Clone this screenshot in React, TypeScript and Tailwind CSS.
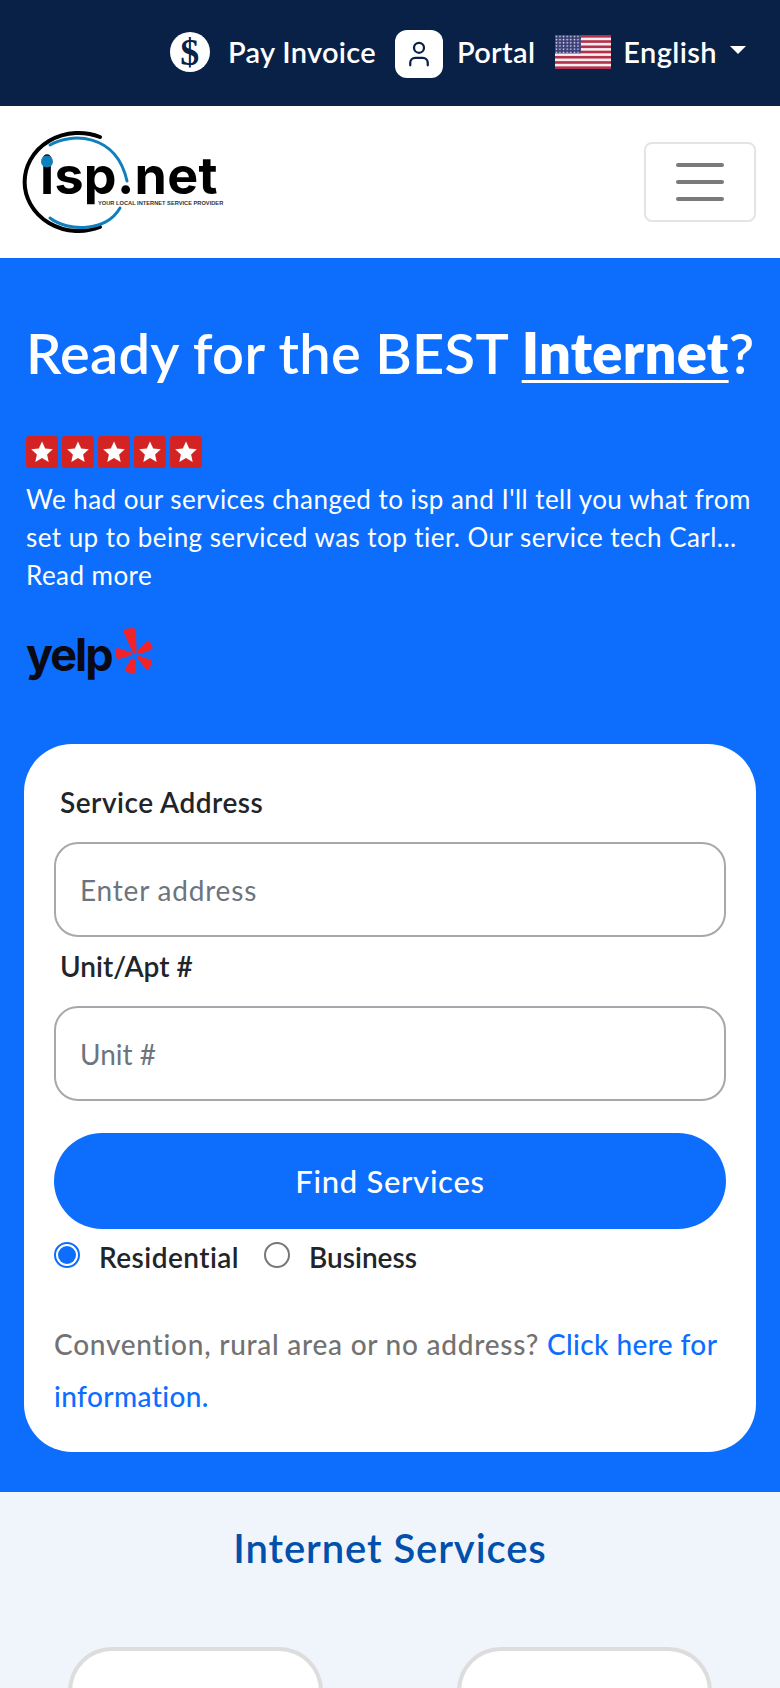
import { User } from "lucide-react";

const FONT = "font-['Lato','Noto_Sans',sans-serif]";

function Flag() {
  const stripes = [0, 1, 2, 3, 4, 5, 6];
  return (
    <svg width="56" height="34" viewBox="0 0 56 34" className="shrink-0">
      <defs>
        <pattern id="stars" width="3.6" height="3.2" patternUnits="userSpaceOnUse">
          <circle cx="1.4" cy="1.4" r="0.8" fill="#e8e8f0" />
        </pattern>
      </defs>
      <rect width="56" height="34" fill="#f4eef0" />
      {stripes.map((i) => (
        <rect key={i} y={i * 5.23} width="56" height="2.62" fill="#b5314a" />
      ))}
      <rect width="26" height="18.3" fill="#3c3f78" />
      <rect width="26" height="18.3" fill="url(#stars)" />
    </svg>
  );
}

function Logo() {
  return (
    <div className="relative h-[101px] w-[200px] shrink-0">
      <span className="absolute left-[16px] top-[9px] font-['Inter',sans-serif] text-[52px] font-bold leading-[70px] tracking-[0.3px] text-black">
        isp.net
      </span>
      <svg width="112" height="101" viewBox="0 0 112 101" className="absolute left-0 top-0 overflow-visible" fill="none">
        <path d="M76 5 A 54 49 0 1 0 76 95" stroke="#000" strokeWidth="4" strokeLinecap="round" />
        <path d="M26 13 C 46 1 92 0 103 49" stroke="#0f7fbd" strokeWidth="3" strokeLinecap="round" />
        <path d="M26 86 C 44 100 82 100 96 76" stroke="#0f7fbd" strokeWidth="3" strokeLinecap="round" />
        <circle cx="23" cy="29.5" r="6" fill="#0f7fbd" />
      </svg>
      <span className="absolute left-[74px] top-[67px] whitespace-nowrap font-['Liberation_Sans',sans-serif] text-[5.7px] font-bold leading-[8px] text-[#333]">
        YOUR LOCAL INTERNET SERVICE PROVIDER
      </span>
    </div>
  );
}

function Star() {
  return (
    <span className="flex h-8 w-8 items-center justify-center rounded-[3px] bg-[#d32323]">
      <svg width="24" height="24" viewBox="0 0 24 24" fill="#fff">
        <path d="M12 1.5l3.2 7 7.6.8-5.7 5.1 1.6 7.500L12 18.100l-6.700 3.800 1.600-7.500L1.200 9.300l7.600-.8z" />
      </svg>
    </span>
  );
}

function Yelp() {
  return (
    <div className="flex items-end">
      <span className="font-['Inter',sans-serif] text-[45px] font-bold leading-[44px] tracking-[-2px] text-[#0a0a14]">yelp</span>
      <svg width="38" height="47" viewBox="0 0 38 47" fill="#f0222a" className="mb-[2px] ml-[4px]">
        <path d="M8 5 Q6 2 9 1 L16 0 Q20 0 20 3 L20.500 24 Q20 28 17 25Z" />
        <path d="M2 20 L14 24 Q18 26 15 27.500 L3 31 Q0 31 0 28 L0 22 Q0 20 2 20Z" />
        <path d="M22 22 L31 13 Q33 12 34 14 L36.500 19 Q37 21 35 22 L24 26 Q20 26 22 22Z" />
        <path d="M24 28 L35 32 Q37 33 36 35 L33 41 Q32 43 30 41 L22 31 Q21 27 24 28Z" />
        <path d="M18 31 Q20 31 20 34 L19 44 Q19 46 17 46 L11 44 Q8 43 9 41 L15 31 Q17 30 18 31Z" />
      </svg>
    </div>
  );
}

export default function App() {
  return (
    <div className={`${FONT} min-h-[1688px] w-[780px] overflow-hidden bg-[#f0f5fc]`}>
      <div className="flex h-[106px] items-center justify-end bg-[#0a2147] pb-[2px] pr-[34px] text-[29px] font-semibold tracking-[0.3px] text-white">
        <span className="flex h-10 w-10 items-center justify-center rounded-full bg-white font-['Liberation_Serif',serif] text-[38px] font-bold text-[#0a2147]">
          $
        </span>
        <span className="ml-[18px]">Pay Invoice</span>
        <span className="ml-[19px] mt-[4px] flex h-12 w-12 items-center justify-center rounded-xl bg-white">
          <User size={30} strokeWidth={1.8} className="text-[#0a2147]" />
        </span>
        <span className="ml-[14px]">Portal</span>
        <span className="ml-[20px]">
          <Flag />
        </span>
        <span className="ml-[12px] tracking-[0.4px]">English</span>
        <span className="mb-1 ml-[13px] h-0 w-0 border-x-[8px] border-t-[8px] border-x-transparent border-t-white" />
      </div>

      <div className="flex h-[152px] items-center justify-between bg-white px-6">
        <Logo />
        <div className="flex h-20 w-[112px] flex-col items-center justify-center gap-[13px] rounded-lg border-2 border-[#e4e4e4]">
          <span className="h-1 w-12 rounded bg-[#7a7a7a]" />
          <span className="h-1 w-12 rounded bg-[#7a7a7a]" />
          <span className="h-1 w-12 rounded bg-[#7a7a7a]" />
        </div>
      </div>

      <div className="bg-[#0d6efd] px-6 pb-10 pt-[58px]">
        <h1 className="whitespace-nowrap pl-[2px] text-[56px] font-semibold leading-[74px] tracking-[0.3px] text-white">
          Ready for the BEST <span className="font-extrabold underline decoration-[3px] underline-offset-[6px]">Internet</span>?
        </h1>
        <div className="mt-[46px] flex gap-1 pl-[2px]">
          <Star />
          <Star />
          <Star />
          <Star />
          <Star />
        </div>
        <p className="mt-[12px] whitespace-nowrap pl-[2px] text-[26px] leading-[38px] tracking-[0.45px] text-white">
          We had our services changed to isp and I'll tell you what from
          <br />
          set up to being serviced was top tier. Our service tech Carl...
          <br />
          Read more
        </p>
        <div className="mt-[34px] pl-[2px]">
          <Yelp />
        </div>

        <div className="mt-[67px] rounded-[48px] bg-white px-[30px] pb-[30px] pt-[40px]">
          <label className="block pl-[6px] text-[28px] font-semibold leading-[36px] tracking-[0.5px] text-[#212529]">Service Address</label>
          <div className="mt-[22px] flex h-[95px] items-center rounded-[24px] border-2 border-[#a5a9ad] pl-6 text-[28px] tracking-[0.8px] text-[#6c757d]">
            Enter address
          </div>
          <label className="mt-[11px] block pl-[6px] text-[28px] font-semibold leading-[36px] text-[#212529]">Unit/Apt #</label>
          <div className="mt-[22px] flex h-[95px] items-center rounded-[24px] border-2 border-[#a5a9ad] pl-6 text-[28px] text-[#6c757d]">
            Unit #
          </div>
          <button className="mt-8 block h-[96px] w-full rounded-[48px] bg-[#0d6efd] text-[31px] font-medium tracking-[0.7px] text-white">Find Services</button>
          <div className="mt-[10px] flex items-center text-[28px] font-semibold leading-[36px] tracking-[0.45px] text-[#212529]">
            <span className="mb-1 flex h-[26px] w-[26px] items-center justify-center rounded-full border-2 border-[#0d6efd]">
              <span className="h-[18px] w-[18px] rounded-full bg-[#0d6efd]" />
            </span>
            <span className="ml-[19px]">Residential</span>
            <span className="mb-1 ml-[25px] h-[26px] w-[26px] rounded-full border-2 border-[#777]" />
            <span className="ml-[19px] tracking-[0px]">Business</span>
          </div>
          <p className="mt-[43px] text-[28px] font-medium leading-[52px] tracking-[0.75px] text-[#727272]">
            Convention, rural area or no address? <a className="tracking-[0.4px] text-[#0d6efd]">Click here for information.</a>
          </p>
        </div>
      </div>

      <h2 className="pt-[30px] text-center text-[40px] font-semibold leading-[52px] tracking-[0.9px] text-[#0050ac]">Internet Services</h2>
      <div className="mt-[73px] flex justify-between px-[68px]">
        <div className="h-[60px] w-[255px] rounded-t-[44px] border-x-4 border-t-4 border-[#dddddd] bg-white" />
        <div className="h-[60px] w-[255px] rounded-t-[44px] border-x-4 border-t-4 border-[#dddddd] bg-white" />
      </div>
    </div>
  );
}
